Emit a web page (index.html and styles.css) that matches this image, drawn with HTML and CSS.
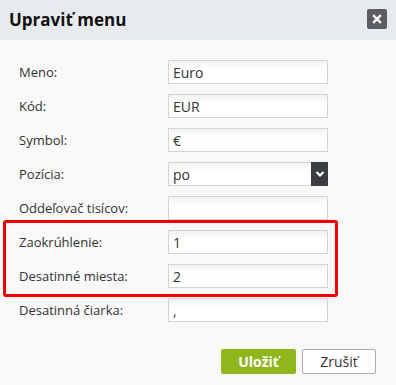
FILE: index.html
```html
<!DOCTYPE html>
<html>
<head>
    <title>Upraviť menu</title>
    <link rel="stylesheet" href="styles.css">
</head>
<body>
    <section class="dialog">
        <header class="dialog-head">
            <h1>Upraviť menu</h1>
            <button class="close" type="button" aria-label="Zavrieť">
                <svg width="10" height="10" viewBox="0 0 10 10"><path d="M2 2 L8 8 M8 2 L2 8" stroke="#fff" stroke-width="2.4" stroke-linecap="square"/></svg>
            </button>
        </header>
        <form class="form">
            <label class="row"><span>Meno:</span><input class="field" value="Euro"></label>
            <label class="row"><span>Kód:</span><input class="field" value="EUR"></label>
            <label class="row"><span>Symbol:</span><input class="field" value="€"></label>
            <label class="row"><span>Pozícia:</span>
                <div class="field select">
                    <span class="select-val">po</span>
                    <span class="select-btn">
                        <svg width="10" height="8" viewBox="0 0 10 8"><path d="M1.5 2 L5 5.5 L8.5 2" fill="none" stroke="#fff" stroke-width="2.2"/></svg>
                    </span>
                </div>
            </label>
            <label class="row"><span>Oddeľovač tisícov:</span><input class="field" value=""></label>
            <div class="highlight">
                <label class="row"><span>Zaokrúhlenie:</span><input class="field" value="1"></label>
                <label class="row"><span>Desatinné miesta:</span><input class="field" value="2"></label>
            </div>
            <label class="row"><span>Desatinná čiarka:</span><input class="field" value=","></label>
            <div class="actions">
                <button class="btn btn-save" type="button">Uložiť</button>
                <button class="btn btn-cancel" type="button">Zrušiť</button>
            </div>
        </form>
    </section>
</body>
</html>
```

FILE: styles.css
```css
body {
    margin: 0;
    background-color: #f8f8f8;
    font-family: "Open Sans", "DejaVu Sans", sans-serif;
    color: #333;
}
.dialog {
    width: 396px;
    height: 385px;
}
.dialog-head {
    height: 40px;
    background-color: #e8ebee;
    display: flex;
    align-items: center;
    justify-content: space-between;
    padding: 0 9px 0 9px;
    box-sizing: border-box;
}
.dialog-head h1 {
    margin: 0;
    font-size: 17px;
    font-weight: 700;
    color: #111;
    padding-bottom: 1px;
}
.close {
    width: 20px;
    height: 20px;
    margin-top: -3px;
    padding: 0;
    border: none;
    border-radius: 2px;
    background-color: #5b5d60;
    display: flex;
    align-items: center;
    justify-content: center;
}
.form {
    display: flex;
    flex-direction: column;
    gap: 10px;
    padding: 20px 0 0 19px;
}
.row {
    display: grid;
    grid-template-columns: 149px 160px;
    align-items: center;
    font-size: 13px;
    height: 24px;
}
.field {
    box-sizing: border-box;
    width: 160px;
    height: 24px;
    margin: 0;
    border: 1px solid #d3d3d3;
    background: linear-gradient(#f3f3f3, #ffffff 40%);
    font-family: "Open Sans", "DejaVu Sans", sans-serif;
    font-size: 14px;
    color: #333;
    padding: 0 4px;
    outline: none;
}
.select {
    display: flex;
    align-items: center;
    justify-content: space-between;
    padding: 0 0 0 4px;
}
.select-btn {
    width: 17px;
    height: 24px;
    margin-right: -1px;
    background-color: #3a3e40;
    display: flex;
    align-items: center;
    justify-content: center;
}
.highlight {
    display: flex;
    flex-direction: column;
    gap: 10px;
    margin: -10px 0 -9px -16px;
    width: 335px;
    box-sizing: border-box;
    padding: 7px 0 6px 13px;
    border: 3px solid #f00000;
    border-radius: 3px;
}
.actions {
    display: flex;
    gap: 6px;
    padding-left: 202px;
    margin-top: 17px;
}
.btn {
    height: 25px;
    box-sizing: border-box;
    border-radius: 2px;
    font-family: "Open Sans", "DejaVu Sans", sans-serif;
    font-size: 14px;
    padding: 0;
}
.btn-save {
    width: 75px;
    border: none;
    background-color: #8fb61c;
    color: #fff;
    font-weight: 700;
}
.btn-cancel {
    width: 74px;
    border: 1px solid #a9abb3;
    background-color: #fff;
    color: #333;
}
```
